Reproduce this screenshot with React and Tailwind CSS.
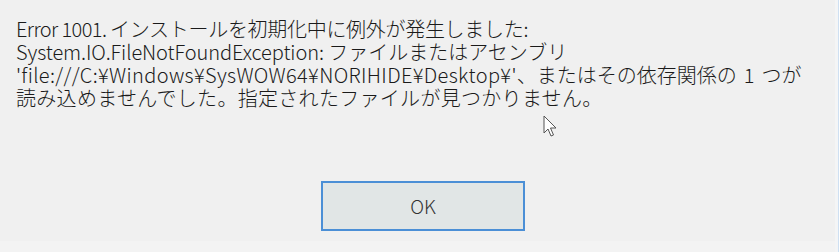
export default function App() {
  const jp = {
    fontFamily: '"Noto Sans CJK JP", "Noto Sans", sans-serif',
  };

  return (
    <div className="relative w-[839px] h-[252px] bg-[#f0f0f0] overflow-hidden flex">
      <div className="flex-1 flex flex-col">
        <div
          className="pl-[16px] pt-[17px] text-[20px] leading-[23px] text-[#1a1a1a] font-light whitespace-pre"
          style={jp}
        >
          <p className="flex h-[23px]">
            <span className="tracking-[-0.6px]">Error 1001. </span>
            <span className="tracking-[-0.3px]">インストールを初期化中に例外が発生しました:</span>
          </p>
          <p className="flex h-[23px]">
            <span className="tracking-[-0.1px]">System.IO.FileNotFoundException: </span>
            <span>ファイルまたはアセンブリ</span>
          </p>
          <p className="flex h-[23px]">
            <span className="tracking-[0.35px]">'file:///C:¥Windows¥SysWOW64¥NORIHIDE¥Desktop¥'</span>
            <span>、またはその依存関係の</span>
            <span className="px-[7px]">1</span>
            <span>つが</span>
          </p>
          <p className="flex h-[23px]">
            <span className="tracking-[0.3px]">読み込めませんでした。指定されたファイルが見つかりません。</span>
          </p>
        </div>
        <div className="flex pl-[321px] pt-[72px]">
          <button
            className="w-[204px] h-[50px] border-2 border-[#4b8fd6] bg-[#e1e6e6] text-[19px] text-[#333] font-light"
            style={jp}
          >
            OK
          </button>
        </div>
        <div className="mt-auto h-[11px] bg-[#f3f3f3]" />
      </div>
      <div className="w-[4px] bg-[#f4f5f6] border-r border-[#cfe0f2]" />

      {/* mouse pointer */}
      <svg
        className="absolute left-[543px] top-[115px]"
        width="16"
        height="24"
        viewBox="0 0 16 24"
      >
        <path
          d="M1 1 L1 18 L5 14 L8 21 L10.5 20 L7.5 13 L13 13 Z"
          fill="#ffffff"
          stroke="#555"
          strokeWidth="1"
          strokeLinejoin="round"
        />
      </svg>
    </div>
  );
}
